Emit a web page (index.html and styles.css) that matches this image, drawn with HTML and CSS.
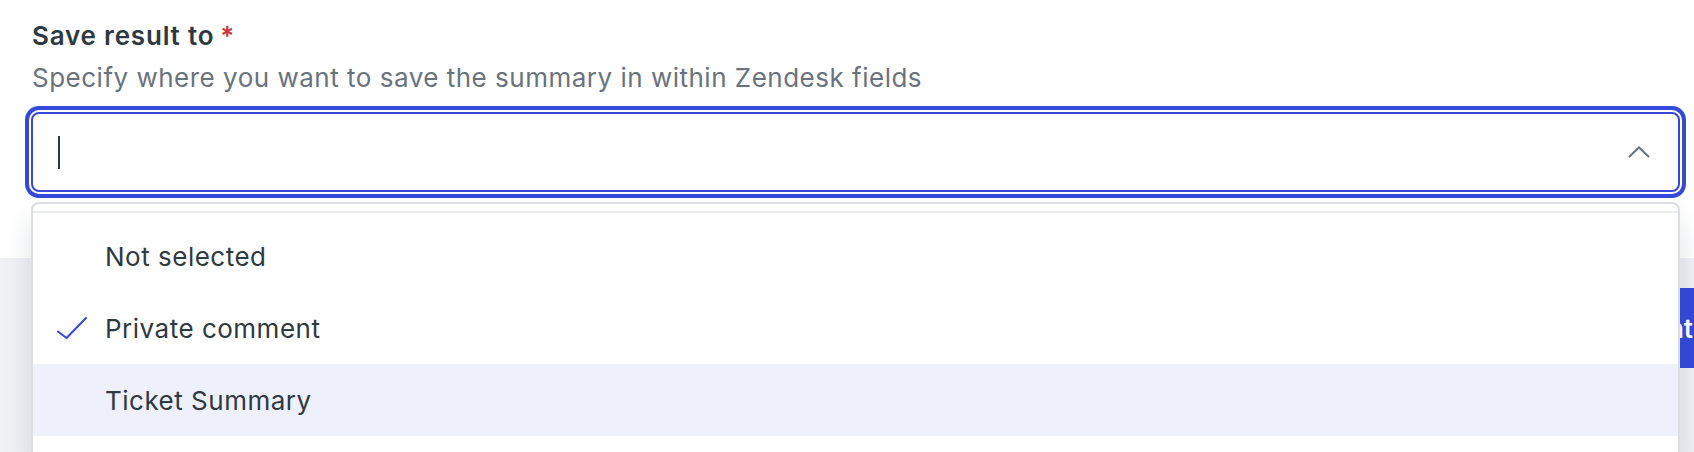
FILE: index.html
```html
<!DOCTYPE html>
<html lang="en">
<head>
<meta charset="utf-8">
<title>Save result to</title>
<link rel="stylesheet" href="styles.css">
</head>
<body>
<main class="page">
  <div class="field">
    <div class="label">Save result to<span class="req">*</span></div>
    <div class="hint">Specify where you want to save the summary in within Zendesk fields</div>
    <div class="combo">
      <div class="input">
        <span class="caret"></span>
        <svg class="chev" viewBox="0 0 22 12" width="22" height="12" aria-hidden="true"><polyline points="1,11 11,1.5 21,11" fill="none" stroke="#68737d" stroke-width="2"/></svg>
      </div>
      <div class="menu">
        <div class="menu-sep"></div>
        <ul class="list">
          <li class="opt"><span class="icon"></span>Not selected</li>
          <li class="opt"><span class="icon"><svg viewBox="0 0 30 22" width="30" height="22" aria-hidden="true"><polyline points="1,14.5 9.5,21 29,1" fill="none" stroke="#3448da" stroke-width="2" stroke-linecap="round" stroke-linejoin="round"/></svg></span>Private comment</li>
          <li class="opt active"><span class="icon"></span>Ticket Summary</li>
        </ul>
      </div>
    </div>
  </div>
  <div class="footer">
    <button class="btn" type="button">Save agent</button>
  </div>
</main>
</body>
</html>
```

FILE: styles.css
```css
html, body {
  margin: 0;
  height: 100%;
  overflow: hidden;
  background: #ffffff;
  font-family: Inter, "Noto Sans", "Liberation Sans", sans-serif;
}

.page {
  display: flex;
  flex-direction: column;
  height: 100%;
}

.field {
  padding: 18px 14px 0 31px;
}

.label {
  font-size: 26px;
  line-height: 36px;
  font-weight: 600;
  letter-spacing: 0.8px;
  color: #2f3941;
  padding-left: 1px;
  margin-bottom: 6px;
}

.req {
  color: #cc3340;
  margin-left: 6px;
}

.hint {
  font-size: 26px;
  line-height: 36px;
  letter-spacing: 0.5px;
  color: #68737d;
  padding-left: 1px;
}

.combo {
  position: relative;
  margin-top: 16px;
  z-index: 2;
}

.input {
  box-sizing: border-box;
  height: 80px;
  border: 2px solid #3448da;
  border-radius: 8px;
  box-shadow: 0 0 0 2px #ffffff, 0 0 0 6px #3448da;
  background: #ffffff;
  display: flex;
  align-items: center;
  padding: 0 28px 0 25px;
}

.caret {
  width: 2px;
  height: 33px;
  background: #2f3941;
}

.chev {
  margin-left: auto;
  display: block;
}

.menu {
  position: absolute;
  left: 0;
  right: 0;
  top: calc(100% + 10px);
  box-sizing: border-box;
  height: 250px;
  background: #ffffff;
  border: 2px solid #dadde1;
  border-bottom: 0;
  border-radius: 8px 8px 0 0;
  padding-top: 7px;
  overflow: hidden;
  box-shadow: 0 20px 28px rgba(23, 73, 77, 0.15);
}

.menu-sep {
  border-top: 2px solid #e9ebed;
}

.list {
  list-style: none;
  margin: 0;
  padding: 7px 0 0;
}

.opt {
  height: 72px;
  display: flex;
  align-items: center;
  padding-left: 24px;
  font-size: 26px;
  letter-spacing: 0.5px;
  color: #2f3941;
}

.opt.active {
  background: #eef0fc;
}

.icon {
  width: 30px;
  height: 22px;
  margin-right: 18px;
  display: flex;
}

.footer {
  margin-top: 66px;
  flex: 1;
  background: #eff1f5;
  display: flex;
  justify-content: flex-end;
  align-items: flex-start;
  padding-top: 30px;
}

.btn {
  height: 80px;
  border: 0;
  border-radius: 8px;
  background: #3448da;
  color: #ffffff;
  font-family: Inter, "Noto Sans", sans-serif;
  font-size: 26px;
  font-weight: 600;
  padding: 0 32px;
  margin-right: -31px;
}
```
